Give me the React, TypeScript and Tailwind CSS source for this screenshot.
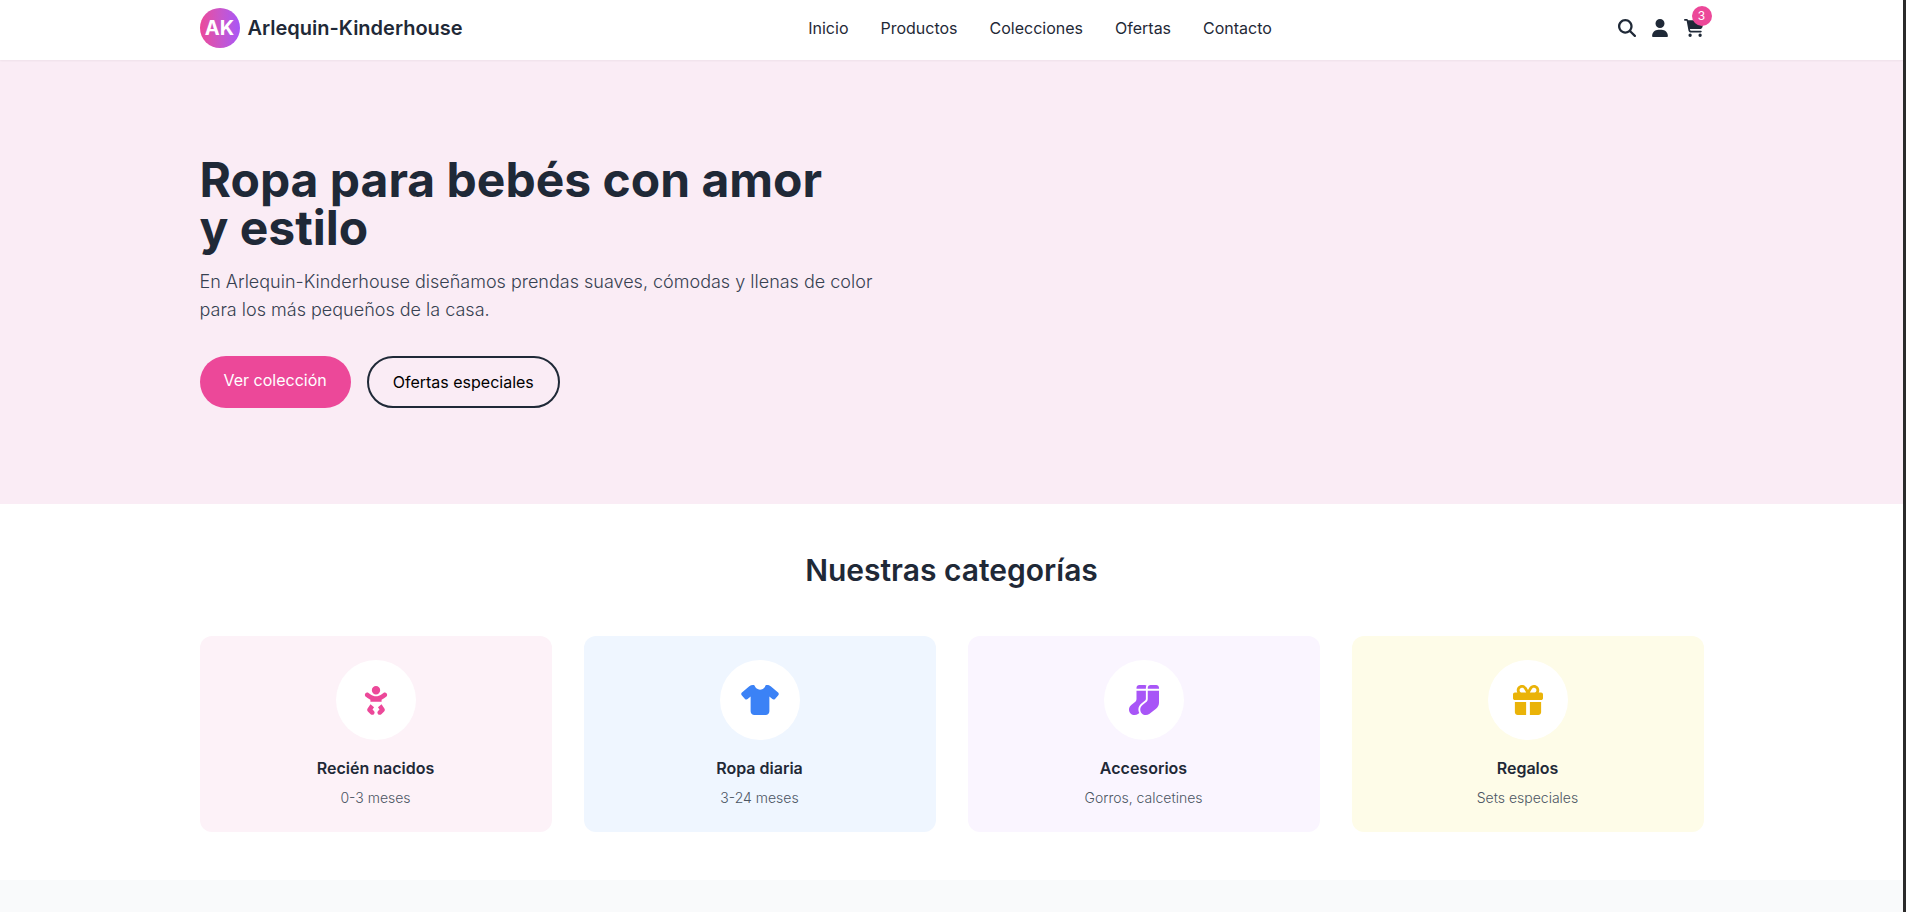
import type { IconType } from 'react-icons';
import {
  FaBaby,
  FaCartShopping,
  FaGift,
  FaMagnifyingGlass,
  FaShirt,
  FaSocks,
  FaUser,
} from 'react-icons/fa6';

const links = [
  { label: 'Inicio', href: '#inicio' },
  { label: 'Productos', href: '#productos' },
  { label: 'Colecciones', href: '#colecciones' },
  { label: 'Ofertas', href: '#ofertas' },
  { label: 'Contacto', href: '#contacto' },
];

type Category = {
  title: string;
  detail: string;
  Icon: IconType;
  card: string;
  icon: string;
};

const categories: Category[] = [
  { title: 'Recién nacidos', detail: '0-3 meses', Icon: FaBaby, card: 'bg-[#fdf2f8]', icon: 'w-[26px] text-[#ec4899]' },
  { title: 'Ropa diaria', detail: '3-24 meses', Icon: FaShirt, card: 'bg-[#eff6ff]', icon: 'w-[38px] text-[#3b82f6]' },
  { title: 'Accesorios', detail: 'Gorros, calcetines', Icon: FaSocks, card: 'bg-[#faf5ff]', icon: 'w-[30px] text-[#a855f7]' },
  { title: 'Regalos', detail: 'Sets especiales', Icon: FaGift, card: 'bg-[#fefce8]', icon: 'w-[30px] text-[#eab308]' },
];

function Header() {
  return (
    <header className="relative z-10 bg-white shadow-[0_1px_2px_rgba(0,0,0,0.05)]">
      <div className="mx-auto flex max-w-[1536px] items-center justify-between px-4 pt-2 pb-3">
        <a href="#inicio" className="flex items-center gap-2">
          <span className="flex h-10 w-10 items-center justify-center rounded-full bg-linear-to-r from-[#ec4899] to-[#a855f7] text-xl font-bold text-white">
            AK
          </span>
          <span className="text-xl font-semibold">Arlequin-Kinderhouse</span>
        </a>
        <nav className="flex gap-8">
          {links.map((link) => (
            <a key={link.label} href={link.href}>
              {link.label}
            </a>
          ))}
        </nav>
        <div className="flex items-center gap-4 text-lg">
          <button type="button" aria-label="Buscar" className="flex h-7 items-center">
            <FaMagnifyingGlass />
          </button>
          <button type="button" aria-label="Mi cuenta" className="flex h-7 items-center">
            <FaUser className="w-4" />
          </button>
          <button type="button" aria-label="Carrito" className="relative flex h-7 items-center">
            <FaCartShopping className="w-5" />
            <span className="absolute -top-2 -right-2 flex h-5 w-5 items-center justify-center rounded-full bg-[#ec4899] text-xs text-white">
              3
            </span>
          </button>
        </div>
      </div>
    </header>
  );
}

function Hero() {
  return (
    <section className="bg-[#faecf5] py-24">
      <div className="mx-auto max-w-[1536px] px-4">
        <div className="max-w-[684px]">
          <h1 className="mb-4 text-5xl leading-12 font-bold">Ropa para bebés con amor y&nbsp;estilo</h1>
          <p className="mb-8 text-lg leading-7 font-light text-[#374151]">
            En Arlequin-Kinderhouse diseñamos prendas suaves, cómodas y llenas de color para los más
            pequeños de la casa.
          </p>
          <div className="flex gap-4">
            <a href="#colecciones" className="rounded-full bg-[#ec4899] px-6 py-3 text-white">
              Ver colección
            </a>
            <a
              href="#ofertas"
              className="rounded-full border-2 border-[#1f2937] px-6 py-3 text-black"
            >
              Ofertas especiales
            </a>
          </div>
        </div>
      </div>
    </section>
  );
}

function Categories() {
  return (
    <section className="bg-white py-12">
      <div className="mx-auto max-w-[1536px] px-4">
        <h2 className="mb-12 text-center text-3xl font-semibold">Nuestras categorías</h2>
        <div className="grid grid-cols-4 gap-8">
          {categories.map(({ title, detail, Icon, card, icon }) => (
            <article key={title} className={`flex flex-col items-center rounded-xl p-6 text-center ${card}`}>
              <div className="mb-4 flex h-20 w-20 items-center justify-center rounded-full bg-white">
                <Icon className={`h-[30px] ${icon}`} />
              </div>
              <h3 className="mb-2 font-semibold">{title}</h3>
              <p className="text-sm font-light text-[#4b5563]">{detail}</p>
            </article>
          ))}
        </div>
      </div>
    </section>
  );
}

export default function App() {
  return (
    <div className="min-h-screen border-r-3 border-[#2b2b2b] bg-[#f9fafb] font-['Inter',sans-serif] text-[#1f2937]">
      <Header />
      <main>
        <Hero />
        <Categories />
      </main>
    </div>
  );
}
